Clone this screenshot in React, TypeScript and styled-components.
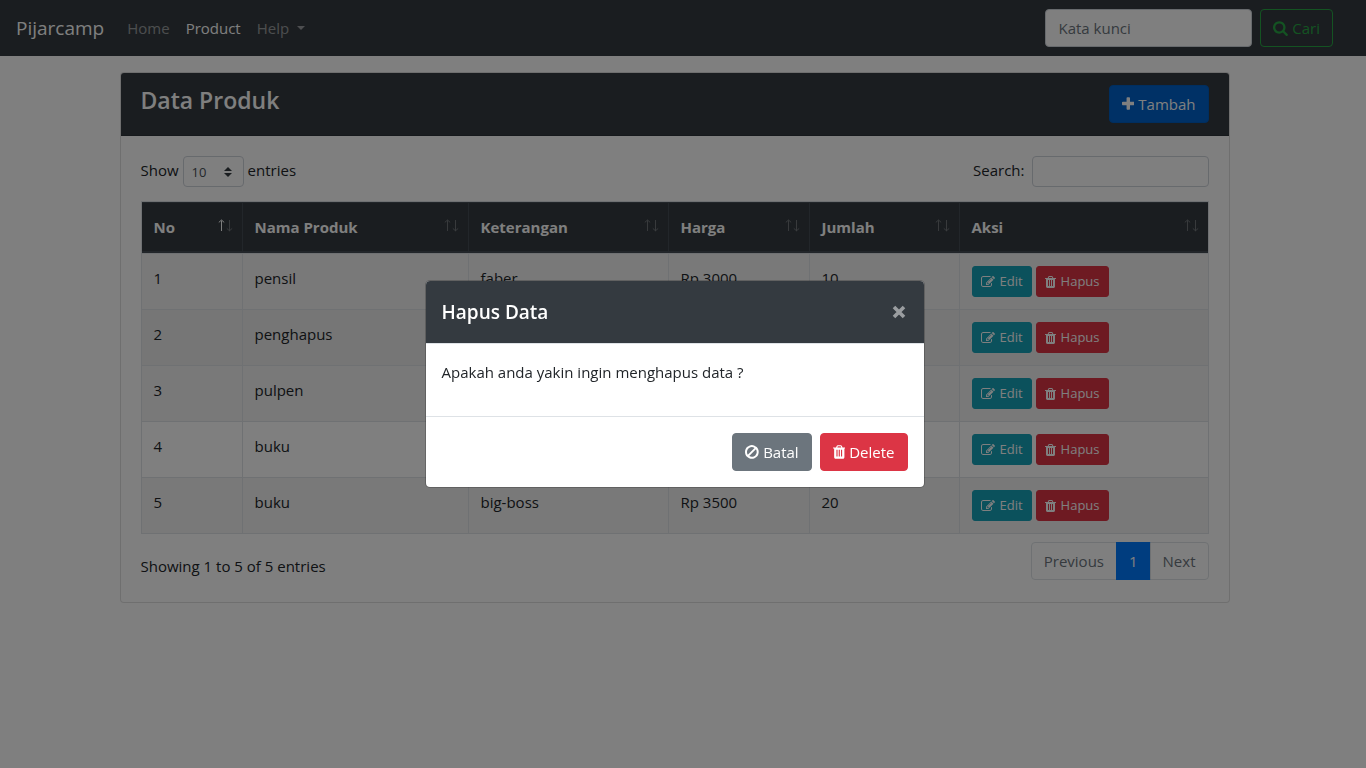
import React from 'react';
import styled, { createGlobalStyle, css } from 'styled-components';

const GlobalStyle = createGlobalStyle`
  *, *::before, *::after { box-sizing: border-box; }
  body {
    margin: 0;
    background: #fff;
    color: #212529;
    font-family: 'Segoe UI', 'Open Sans', 'Noto Sans', sans-serif;
    font-size: 15px;
    line-height: 24px;
  }
  button, input, select { font-family: inherit; margin: 0; }
`;

/* ---------- icons ---------- */

type IconName = 'search' | 'plus' | 'trash' | 'edit' | 'ban';

const icons: Record<IconName, { x: number; w: number; d: string }> = {
  search: {
    x: 64,
    w: 1664,
    d: 'M1216 832q0-185-131.5-316.5t-316.5-131.5-316.5 131.5-131.5 316.5 131.5 316.5 316.5 131.5 316.5-131.5 131.5-316.5zm512 832q0 52-38 90t-90 38q-54 0-90-38l-343-342q-179 124-399 124-143 0-273.5-55.5t-225-150-150-225-55.5-273.5 55.5-273.5 150-225 225-150 273.5-55.5 273.5 55.5 225 150 150 225 55.5 273.5q0 220-124 399l343 343q37 37 37 90z',
  },
  plus: {
    x: 192,
    w: 1408,
    d: 'M1600 736v192q0 40-28 68t-68 28h-416v416q0 40-28 68t-68 28h-192q-40 0-68-28t-28-68v-416h-416q-40 0-68-28t-28-68v-192q0-40 28-68t68-28h416v-416q0-40 28-68t68-28h192q40 0 68 28t28 68v416h416q40 0 68 28t28 68z',
  },
  trash: {
    x: 192,
    w: 1408,
    d: 'M704 1376v-704q0-14-9-23t-23-9h-64q-14 0-23 9t-9 23v704q0 14 9 23t23 9h64q14 0 23-9t9-23zm256 0v-704q0-14-9-23t-23-9h-64q-14 0-23 9t-9 23v704q0 14 9 23t23 9h64q14 0 23-9t9-23zm256 0v-704q0-14-9-23t-23-9h-64q-14 0-23 9t-9 23v704q0 14 9 23t23 9h64q14 0 23-9t9-23zm-544-992h448l-48-117q-7-9-17-11h-317q-10 2-17 11zm928 32v64q0 14-9 23t-23 9h-96v948q0 83-47 143.5t-113 60.5h-832q-66 0-113-58.5t-47-141.5v-952h-96q-14 0-23-9t-9-23v-64q0-14 9-23t23-9h309l70-167q15-37 54-63t79-26h320q40 0 79 26t54 63l70 167h309q14 0 23 9t9 23z',
  },
  edit: {
    x: 0,
    w: 1792,
    d: 'M888 1184l116-116-152-152-116 116v56h96v96h56zm440-720q-16-16-33 1l-350 350q-17 17-1 33t33-1l350-350q17-17 1-33zm80 594v190q0 119-84.5 203.5t-203.5 84.5h-832q-119 0-203.5-84.5t-84.5-203.5v-832q0-119 84.5-203.5t203.5-84.5h832q63 0 117 25 15 7 18 23 3 17-9 29l-49 49q-14 14-32 8-23-6-45-6h-832q-66 0-113 47t-47 113v832q0 66 47 113t113 47h832q66 0 113-47t47-113v-126q0-13 9-22l64-64q15-15 35-7t20 29zm-96-738l288 288-672 672h-288v-288zm444 132l-92 92-288-288 92-92q28-28 68-28t68 28l152 152q28 28 28 68t-28 68z',
  },
  ban: {
    x: 128,
    w: 1536,
    d: 'M1440 893q0-161-87-295l-754 753q137 89 297 89 111 0 211.5-43.5t173.5-116.5 116-174.5 43-212.5zm-999 299l755-754q-135-91-300-91-148 0-273 73t-198 199-73 274q0 162 89 299zm1223-299q0 157-61 300t-163.5 246-245 164-298.5 61-298.5-61-245-164-163.5-246-61-300 61-299.5 163.5-245.5 245-164 298.5-61 298.5 61 245 164 163.5 245.5 61 299.5z',
  },
};

const Icon = ({ name, size = 16 }: { name: IconName; size?: number }) => {
  const { x, w, d } = icons[name];
  return (
    <svg width={(w / 1792) * size} height={size} viewBox={`${x} 0 ${w} 1792`} fill="currentColor" aria-hidden="true">
      <path d={d} />
    </svg>
  );
};

/* ---------- buttons ---------- */

type Tone = 'primary' | 'info' | 'danger' | 'secondary' | 'outline';

const tones: Record<Tone, ReturnType<typeof css>> = {
  primary: css`background: #0062cc; border-color: #005cbf; color: #fff;`,
  info: css`background: #17a2b8; border-color: #17a2b8; color: #fff;`,
  danger: css`background: #dc3545; border-color: #dc3545; color: #fff;`,
  secondary: css`background: #6c757d; border-color: #6c757d; color: #fff;`,
  outline: css`background: transparent; border-color: #28a745; color: #28a745;`,
};

const Button = styled.button<{ $tone: Tone; $small?: boolean }>`
  display: inline-flex;
  align-items: center;
  justify-content: center;
  gap: ${(p) => (p.$small ? 5 : 4)}px;
  border: 1px solid;
  border-radius: ${(p) => (p.$small ? 3 : 4)}px;
  padding: ${(p) => (p.$small ? '4px 8px' : '6px 12px')};
  font-size: ${(p) => (p.$small ? 13 : 15)}px;
  line-height: ${(p) => (p.$small ? 21 : 24)}px;
  cursor: pointer;
  ${(p) => tones[p.$tone]}
`;

/* ---------- navbar ---------- */

const Navbar = styled.nav`
  display: flex;
  align-items: center;
  min-height: 56px;
  padding: 8px 33px 8px 16px;
  background: #343a40;
`;

const Brand = styled.a`
  margin-right: 15px;
  color: #fff;
  font-size: 19px;
  line-height: 30px;
  text-decoration: none;
`;

const NavList = styled.ul`
  display: flex;
  flex: 1;
  margin: 0;
  padding: 0;
  list-style: none;
`;

const NavLink = styled.a<{ $active?: boolean }>`
  display: flex;
  align-items: center;
  gap: 8px;
  padding: 8px;
  color: ${(p) => (p.$active ? '#fff' : 'rgba(255, 255, 255, 0.5)')};
  text-decoration: none;
`;

const Caret = styled.span`
  border-top: 4px solid;
  border-left: 4px solid transparent;
  border-right: 4px solid transparent;
`;

const SearchForm = styled.form`
  display: flex;
  gap: 8px;
`;

const inputBase = css`
  border: 1px solid #ced4da;
  border-radius: 4px;
  background: #fff;
  color: #495057;
`;

const KeywordInput = styled.input`
  ${inputBase}
  width: 207px;
  height: 38px;
  padding: 6px 12px;
  font-size: 15px;
  &::placeholder { color: #6c757d; opacity: 1; }
`;

/* ---------- card ---------- */

const Main = styled.main`
  padding: 16px 32px 16px 15px;
`;

const Card = styled.section`
  max-width: 1110px;
  margin: 0 auto;
  border: 1px solid rgba(0, 0, 0, 0.125);
  border-radius: 4px;
  background: #fff;
`;

const CardHeader = styled.header`
  display: flex;
  align-items: flex-start;
  justify-content: space-between;
  padding: 12px 20px;
  border-bottom: 1px solid rgba(0, 0, 0, 0.125);
  border-radius: 3px 3px 0 0;
  background: #343a40;
  color: #fff;
`;

const CardTitle = styled.h4`
  margin: 0;
  font-size: 23px;
  font-weight: 600;
  line-height: 30px;
`;

const CardBody = styled.div`
  padding: 20px;
`;

const Controls = styled.div`
  display: flex;
  justify-content: space-between;
  margin-bottom: 14px;
`;

const LengthLabel = styled.label`
  display: flex;
  align-items: flex-start;
  gap: 4px;
  line-height: 28px;
`;

const FilterLabel = styled(LengthLabel)`
  gap: 7px;
`;

const SelectBox = styled.span`
  display: grid;
  align-items: center;
  & > * { grid-area: 1 / 1; }
  & > svg { justify-self: end; margin-right: 12px; pointer-events: none; }
`;

const LengthSelect = styled.select`
  ${inputBase}
  width: 61px;
  height: 31px;
  padding: 4px 8px;
  font-size: 13px;
  appearance: none;
`;

const FilterInput = styled.input`
  ${inputBase}
  width: 177px;
  height: 31px;
  padding: 4px 8px;
  font-size: 13px;
`;

/* ---------- table ---------- */

const Table = styled.table`
  width: 100%;
  border: 1px solid #dee2e6;
  border-collapse: separate;
  border-spacing: 0;
  table-layout: fixed;
`;

const Col = styled.col<{ $width?: number }>`
  width: ${(p) => (p.$width ? `${p.$width}px` : 'auto')};
`;

const HeadCell = styled.th`
  padding: 12px;
  border: 1px solid #454d55;
  border-width: 1px 1px 2px 0;
  background: #343a40;
  color: #fff;
  font-weight: 700;
  text-align: left;
  &:last-child { border-right-width: 0; }
`;

const HeadContent = styled.div`
  display: flex;
  justify-content: space-between;
`;

const SortArrows = styled.svg`
  margin: 4px -3px 0 0;
`;

const Row = styled.tr<{ $hovered?: boolean }>`
  &:nth-child(odd) { background: rgba(0, 0, 0, 0.05); }
  ${(p) => p.$hovered && css`background: rgba(0, 0, 0, 0.075);`}
`;

const Cell = styled.td`
  padding: 12px;
  border: 1px solid #dee2e6;
  border-width: 1px 1px 0 0;
  vertical-align: top;
  &:last-child { border-right-width: 0; }
`;

const Actions = styled.div`
  display: flex;
  gap: 4px;
`;

const TableFooter = styled.div`
  display: flex;
  justify-content: space-between;
  padding: 8px 0 2px;
`;

const Info = styled.div`
  padding-top: 12px;
`;

const Pages = styled.ul`
  display: flex;
  margin: 0;
  padding: 0;
  list-style: none;
`;

const PageLink = styled.a<{ $active?: boolean }>`
  display: block;
  margin-left: -1px;
  padding: 6px 12px;
  border: 1px solid ${(p) => (p.$active ? '#007bff' : '#dee2e6')};
  background: ${(p) => (p.$active ? '#007bff' : '#fff')};
  color: ${(p) => (p.$active ? '#fff' : '#6c757d')};
  text-decoration: none;
  li:first-child > & { border-radius: 4px 0 0 4px; }
  li:last-child > & { border-radius: 0 4px 4px 0; }
`;

/* ---------- modal ---------- */

const Backdrop = styled.div`
  position: fixed;
  inset: 0;
  display: flex;
  align-items: center;
  justify-content: center;
  padding-right: 17px;
  background: rgba(0, 0, 0, 0.5);
`;

const Modal = styled.div`
  width: 100%;
  max-width: 500px;
  border: 1px solid rgba(0, 0, 0, 0.2);
  border-radius: 5px;
  background: #fff;
  background-clip: padding-box;
`;

const ModalHeader = styled.header`
  display: flex;
  align-items: flex-start;
  justify-content: space-between;
  padding: 16px;
  border-bottom: 1px solid #dee2e6;
  border-radius: 4px 4px 0 0;
  background: #343a40;
  color: #fff;
`;

const ModalTitle = styled.h5`
  margin: 0;
  font-size: 19px;
  font-weight: 600;
  line-height: 30px;
`;

const CloseButton = styled.button`
  display: flex;
  padding: 8px 2px;
  border: 0;
  background: transparent;
  color: #fff;
  opacity: 0.5;
  cursor: pointer;
`;

const ModalBody = styled.div`
  padding: 16px;
`;

const Message = styled.p`
  margin: 0 0 16px;
`;

const ModalFooter = styled.footer`
  display: flex;
  justify-content: flex-end;
  gap: 8px;
  padding: 16px;
  border-top: 1px solid #dee2e6;
`;

/* ---------- data ---------- */

const columns = [
  { title: 'No', width: 101 },
  { title: 'Nama Produk', width: 226 },
  { title: 'Keterangan', width: 200 },
  { title: 'Harga', width: 141 },
  { title: 'Jumlah', width: 150 },
  { title: 'Aksi' },
];

type Product = { name: string; note?: string; price?: string; amount?: number };

const products: Product[] = [
  { name: 'pensil', note: 'faber', price: 'Rp 3000', amount: 10 },
  { name: 'penghapus' },
  { name: 'pulpen' },
  { name: 'buku' },
  { name: 'buku', note: 'big-boss', price: 'Rp 3500', amount: 20 },
];

const Sorter = ({ ascending }: { ascending?: boolean }) => (
  <SortArrows width="16" height="13" viewBox="0 0 16 13" fill="none" stroke="#fff" aria-hidden="true">
    <path d="M4.5 12V1.5M1.8 3.4 4.5 1 7.2 3.4" opacity={ascending ? 1 : 0.3} />
    <path d="M12.5 1v10.5M9.8 9.400l2.700 2.400 2.700-2.400" opacity={0.3} />
  </SortArrows>
);

export default function App() {
  return (
    <>
      <GlobalStyle />
      <Navbar>
        <Brand href="#">Pijarcamp</Brand>
        <NavList>
          <li><NavLink href="#">Home</NavLink></li>
          <li><NavLink href="#" $active>Product</NavLink></li>
          <li><NavLink href="#">Help <Caret /></NavLink></li>
        </NavList>
        <SearchForm>
          <KeywordInput type="search" placeholder="Kata kunci" aria-label="Kata kunci" />
          <Button type="button" $tone="outline"><Icon name="search" />Cari</Button>
        </SearchForm>
      </Navbar>

      <Main>
        <Card>
          <CardHeader>
            <CardTitle>Data Produk</CardTitle>
            <Button type="button" $tone="primary"><Icon name="plus" />Tambah</Button>
          </CardHeader>
          <CardBody>
            <Controls>
              <LengthLabel>
                Show
                <SelectBox>
                  <LengthSelect defaultValue="10">
                    <option>10</option>
                    <option>25</option>
                    <option>50</option>
                    <option>100</option>
                  </LengthSelect>
                  <svg width="8" height="10" viewBox="0 0 4 5" fill="#343a40" aria-hidden="true">
                    <path d="M2 0L0 2h4zm0 5L0 3h4z" />
                  </svg>
                </SelectBox>
                entries
              </LengthLabel>
              <FilterLabel>
                Search:
                <FilterInput type="search" />
              </FilterLabel>
            </Controls>

            <Table>
              <colgroup>
                {columns.map((c) => <Col key={c.title} $width={c.width} />)}
              </colgroup>
              <thead>
                <tr>
                  {columns.map((c, i) => (
                    <HeadCell key={c.title} scope="col">
                      <HeadContent>{c.title}<Sorter ascending={i === 0} /></HeadContent>
                    </HeadCell>
                  ))}
                </tr>
              </thead>
              <tbody>
                {products.map((p, i) => (
                  <Row key={i} $hovered={i === 1}>
                    <Cell>{i + 1}</Cell>
                    <Cell>{p.name}</Cell>
                    <Cell>{p.note}</Cell>
                    <Cell>{p.price}</Cell>
                    <Cell>{p.amount}</Cell>
                    <Cell>
                      <Actions>
                        <Button type="button" $tone="info" $small><Icon name="edit" size={14} />Edit</Button>
                        <Button type="button" $tone="danger" $small><Icon name="trash" size={14} />Hapus</Button>
                      </Actions>
                    </Cell>
                  </Row>
                ))}
              </tbody>
            </Table>

            <TableFooter>
              <Info>Showing 1 to 5 of 5 entries</Info>
              <Pages>
                <li><PageLink href="#">Previous</PageLink></li>
                <li><PageLink href="#" $active>1</PageLink></li>
                <li><PageLink href="#">Next</PageLink></li>
              </Pages>
            </TableFooter>
          </CardBody>
        </Card>
      </Main>

      <Backdrop>
        <Modal role="dialog" aria-modal="true" aria-labelledby="modal-title">
          <ModalHeader>
            <ModalTitle id="modal-title">Hapus Data</ModalTitle>
            <CloseButton type="button" aria-label="Close">
              <svg width="14" height="14" viewBox="0 0 14 14" fill="none" stroke="currentColor" strokeWidth="3.6" aria-hidden="true">
                <path d="M2 2l10 10M12 2L2 12" />
              </svg>
            </CloseButton>
          </ModalHeader>
          <ModalBody>
            <Message>Apakah anda yakin ingin menghapus data ?</Message>
          </ModalBody>
          <ModalFooter>
            <Button type="button" $tone="secondary"><Icon name="ban" />Batal</Button>
            <Button type="button" $tone="danger"><Icon name="trash" />Delete</Button>
          </ModalFooter>
        </Modal>
      </Backdrop>
    </>
  );
}
